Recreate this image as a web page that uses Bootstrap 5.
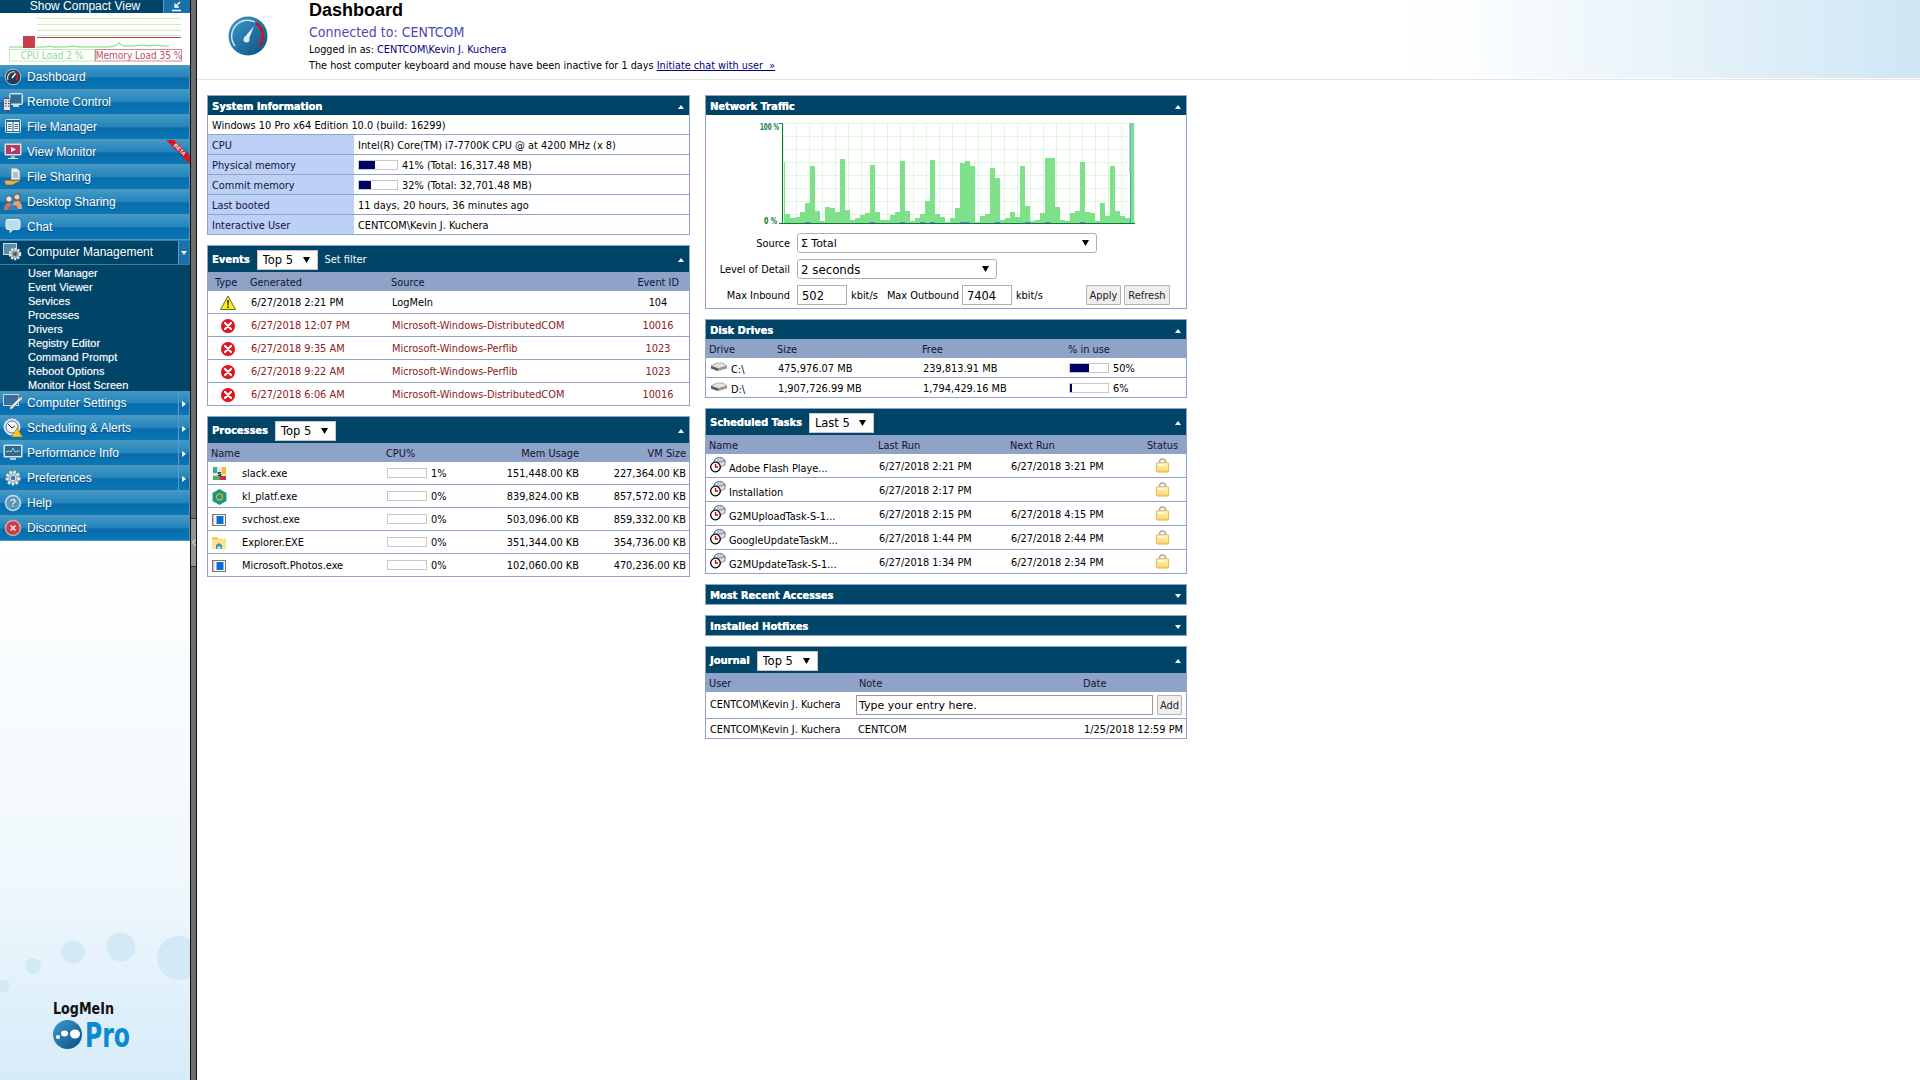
<!DOCTYPE html>
<html lang="en">
<head>
<meta charset="utf-8">
<title>Dashboard</title>
<link rel="stylesheet" href="https://cdn.jsdelivr.net/npm/bootstrap@5.3.0/dist/css/bootstrap.min.css">
<style>
html,body{height:100%;overflow:hidden;background:#fff}
body{font-family:"DejaVu Sans Condensed","DejaVu Sans",sans-serif;font-size:10.9px;line-height:1.2;color:#000}
.lm-defs{width:0;height:0;display:block}
.lm-shell{height:1080px;width:1920px}
.lm-side{width:190px;flex:none;height:1080px;background:linear-gradient(180deg,#fff 541px,#f0f8fd 880px,#d6ebf8 1080px);overflow:hidden}
.lm-split{width:7px;flex:none;background:#6e6e6e;border-left:1px solid #111;border-right:1px solid #111;height:1080px;padding-top:518px}
.lm-handle{height:49px;background:#959595;border-top:1px solid #333;border-bottom:1px solid #333;display:flex;align-items:center;justify-content:center}
.lm-compact{height:13px;background:#004468;color:#fff;font-family:"Liberation Sans",sans-serif;font-size:12px;line-height:13px;overflow:hidden}
.lm-compact span{width:163px;text-align:center;flex:none;padding-left:7px}
.lm-compact b{flex:1;background:#1871a8;border-left:1px solid #5c9cc4;display:flex;justify-content:center;align-items:center}
.lm-mini{height:52px;flex:none}
.lm-mini svg{display:block}
.lm-menu{background:#004468}
.lm-item{height:25px;display:flex;align-items:center;position:relative;color:#fff;font-family:"Liberation Sans",sans-serif;font-size:12px;text-decoration:none;background:linear-gradient(180deg,#3f98c5 0,#2484bb 46%,#0a6cab 52%,#0777b8 100%);border:1px solid #4f93b8;border-width:1px 1px 1px 0;text-shadow:0 1px 1px rgba(0,40,70,.55);padding:0 0 1px 27px}
.lm-item:hover{color:#fff}
.lm-item>svg.lm-ic{position:absolute;left:3px;top:1px;width:20px;height:20px}
.lm-item.lm-on{background:#004468;border-color:#3a7ea4}
.lm-arrow{position:absolute;right:0;top:0;bottom:0;width:11px;border-left:1px solid #5c9cc4;display:flex;align-items:center;justify-content:center}
.lm-on .lm-arrow{background:#1871a8}
.lm-sub{background:#004468;padding:1px 0 0 28px;height:126px}
.lm-sub a{display:block;height:14px;line-height:14px;color:#fff;font-family:"Liberation Sans",sans-serif;font-size:11px;text-decoration:none;text-shadow:0 0 1px rgba(255,255,255,.4)}
.lm-beta{position:absolute;right:-1px;top:-1px}
.lm-logo{margin-top:auto;display:block}
.lm-main{flex:1;min-width:0}
.lm-top{height:80px;padding-left:31px;background:linear-gradient(90deg,#fff 70%,#fbfdfe 74%,#cfe6f5 100%) no-repeat 0 0/100% 78px;border-bottom:1px solid #e4e4e4}
.lm-gauge{width:40px;height:40px;margin-top:16px;flex:none}
.lm-htext{margin-left:41px}
.lm-htext h1{font-family:"Liberation Sans",sans-serif;font-weight:700;font-size:18px;line-height:21px;margin:0;color:#000}
.lm-conn{font-size:14px;line-height:17px;color:#4a4ab4;margin:3px 0 1px}
.lm-line{height:16px;line-height:16px;font-size:10.8px}
.lm-line a,.lm-u{color:#000080}
.lm-u{text-decoration:none}
.lm-cols{padding:15px 0 0 10px;gap:15px}
.lm-c1{width:483px}
.lm-c2{width:482px}
.lm-panel{border:1px solid #8fa2c8;border-bottom:0;border-radius:0;margin-bottom:10px;background:#fff;--bs-card-bg:#fff}
.lm-head{background:#004468;color:#fff;height:19px;padding:2px 5px 0 4px;border:0;border-radius:0!important;font-weight:700;font-size:11px;gap:7px;text-shadow:.3px 0 0 #fff}
.lm-head.lm-tall{height:26px;padding-top:1px}
.lm-head a{color:#fff;text-decoration:none;font-weight:400;font-size:10.9px;text-shadow:none}
.lm-tri{margin-left:auto;flex:none}
.lm-closed{border-bottom:1px solid #8fa2c8}
.table.lm-tb{table-layout:fixed;margin:0;--bs-table-bg:transparent;width:100%;border-collapse:separate;border-spacing:0}
.table.lm-tb>:not(caption)>*>*{padding:3px 3px 0 4px;border-bottom:1px solid #8fa2c8;vertical-align:middle;height:20px;box-shadow:none;color:#000;background:transparent;white-space:nowrap;overflow:hidden}
.table.lm-tb>thead>tr>th{height:19px;background:#8fa2c8;font-weight:400;color:#141433;border:0;padding:2px 3px 0}
.table.lm-tb>tbody>tr>td.lm-lab{background:#bdd0f5;color:#14143a}
.table.lm-tb.lm-r23>tbody>tr>td{height:23px;padding-top:1px}
.table.lm-tb.lm-r24>tbody>tr>td{height:24px;padding-top:2px}
.table.lm-tb>tbody>tr.lm-err>td{color:#8c1a22}
.table.lm-tb>tbody>tr.lm-jrow>td{height:27px;padding-top:0}
.table.lm-tb>tbody>tr>td.lm-note-td{padding:0 4px 0 0}
.table.lm-tb>tbody>tr>td.lm-p2{padding-left:2px}
.table.lm-tb>thead>tr>th.lm-th-type{padding-left:7px}
.table.lm-tb>thead>tr>th.lm-th-id{padding-right:10px}
.table.lm-tb>tbody>tr>td.lm-td-id{padding-left:18px}
.lm-bar{display:inline-block;width:40px;height:10px;border:1px solid #c8c8c8;background:#fff;vertical-align:-1px;margin-right:4px;overflow:hidden}
.lm-bar i{display:block;height:100%;background:#000066}
.w-41{width:41%}.w-32{width:32%}.w-50p{width:50%}.w-6{width:6%}.w-0{width:0}
.c30{width:30px}.c39{width:39px}.c68{width:68px}.c99{width:99px}.c100{width:100px}.c132{width:132px}.c141{width:141px}.c145{width:145px}.c146{width:146px}.c150{width:150px}.c169{width:169px}.c224{width:224px}
.lm-netb{padding:5px 0 3px;border-bottom:1px solid #8fa2c8}
.lm-netb svg{display:block;margin-bottom:7px}
.lm-frow{height:20px;margin-bottom:6px}
.lm-frow.lm-last{margin-bottom:0}
.lm-frow>label,.lm-frow>span{padding-top:1px}
.lm-flab{width:84px;margin-right:7px;text-align:right;flex:none}
.form-select.lm-sel{font-family:"DejaVu Sans",sans-serif;font-size:11.5px;height:20px;line-height:16px;min-height:0;padding:1px 14px 0 3px;border:1px solid #b0b0b0;border-radius:3px;background-color:#fff;color:#000;background-position:right 7px center;background-size:7px 6px;background-image:url("data:image/svg+xml,%3Csvg xmlns='http://www.w3.org/2000/svg' viewBox='0 0 7 6'%3E%3Cpath d='M0 0h7L3.500 6z'/%3E%3C/svg%3E");box-shadow:none;width:auto;flex:none}
.form-select.lm-sel.lm-w300{width:300px;font-size:10.9px}
.form-select.lm-sel.lm-w200{width:200px;font-size:11.8px}
.form-select.lm-sel.lm-w61{width:61px;border-radius:0;border-color:#c8c8c8;padding-left:5px}
.form-select.lm-sel.lm-w64{width:65px;border-radius:0;border-color:#c8c8c8;padding-left:5px}
.form-control.lm-inp{font-family:"DejaVu Sans",sans-serif;font-size:11.5px;height:20px;min-height:0;padding:1px 4px 0;border:1px solid #b0b0b0;border-radius:0;width:50px;flex:none;color:#000;box-shadow:none}
.form-control.lm-inp.lm-note{width:297px;font-size:11px;padding:1px 2px 0;border-color:#999}
.btn.lm-btn{font-family:"DejaVu Sans Condensed",sans-serif;font-size:11px;line-height:16px;height:20px;padding:1px 0 0;border:1px solid #b4b4b4;border-radius:1px;background:#eee;color:#222;flex:none}
.lm-w35{width:35px}.lm-w46{width:46px}.lm-w25{width:25px}
.lm-gap4{margin-left:4px}.lm-gap12{margin-left:9px}.lm-gap3{margin-left:3px}.lm-gapa{margin-left:auto}.lm-end{margin-right:16px}
.lm-i{display:inline-block;vertical-align:middle}
.lm-tn{vertical-align:-1px;margin-right:3px}
.lm-dn{vertical-align:1px;margin-right:3px}
.lm-sts{margin:-3px 2px 0 0}
</style>
</head>
<body>
<svg class="lm-defs" aria-hidden="true">
<defs>
<linearGradient id="gBlue" x1="0" y1="0" x2="1" y2="1"><stop offset="0" stop-color="#3f9ad0"/><stop offset="1" stop-color="#0a4f80"/></linearGradient>
<linearGradient id="gYel" x1="0" y1="0" x2="0" y2="1"><stop offset="0" stop-color="#fff6c8"/><stop offset="1" stop-color="#f8d468"/></linearGradient>
<symbol id="s-warn" viewBox="0 0 16 16"><path d="M8 1L15.500 14.500H.5z" fill="#ffee10" stroke="#6a6a20" stroke-width="1"/><path d="M7.200 5h1.600l-.3 5.500h-1zM7.200 11.500h1.600V13H7.200z" fill="#111"/></symbol>
<symbol id="s-err" viewBox="0 0 16 16"><circle cx="8" cy="8.500" r="7" fill="#a8a8a8" opacity=".5"/><circle cx="8" cy="8" r="7" fill="#e8101c"/><path d="M5 5l6 6M11 5l-6 6" stroke="#fff" stroke-width="2.200" stroke-linecap="round"/></symbol>
<symbol id="s-clock" viewBox="0 0 16 16"><ellipse cx="9.500" cy="4.500" rx="5.500" ry="4" fill="#c8cfdc" stroke="#60687c"/><path d="M4 6l11-2v4l-9 4z" fill="#d8dee8" stroke="#60687c" stroke-width=".7"/><circle cx="5.500" cy="10" r="4.800" fill="#fff" stroke="#000" stroke-width="1.300"/><path d="M5.500 7v3h2.500" stroke="#c80000" stroke-width="1.300" fill="none"/></symbol>
<symbol id="s-lock" viewBox="0 0 16 16"><path d="M5 5.500V3.500a3 2.500 0 016 0v2" fill="none" stroke="#9c9cac" stroke-width="1.400"/><rect x="1.500" y="5" width="13" height="10" rx="1.500" fill="url(#gYel)" stroke="#e0b040"/><path d="M3.500 7.500h5" stroke="#fff" stroke-width="1.500"/></symbol>
<symbol id="s-disk" viewBox="0 0 18 10"><path d="M1 4L7 1h6l4 3v2.500L8 9 1 6.500z" fill="#9a9a9a"/><path d="M1 4l7 2.500L17 4 13 1H7z" fill="#e4e4e4" stroke="#777" stroke-width=".5"/><path d="M1 4v2.500L8 9V6.500z" fill="#5c5c5c"/></symbol>
<symbol id="s-win" viewBox="0 0 14 12"><rect x=".5" y=".5" width="13" height="11" fill="#fff" stroke="#777"/><rect x="1" y="1" width="1.500" height="10" fill="#ccc"/><rect x="4.500" y="2" width="7" height="8" fill="#0a6fd8"/></symbol>
<symbol id="s-up" viewBox="0 0 6 4"><path d="M3 0l3 4H0z" fill="#fff"/></symbol>
<symbol id="s-dn" viewBox="0 0 6 4"><path d="M0 0h6L3 4z" fill="#fff"/></symbol>
<symbol id="s-rt" viewBox="0 0 4 6"><path d="M0 0l4 3-4 3z" fill="#fff"/></symbol>
<symbol id="m-dash" viewBox="0 0 20 20"><circle cx="10" cy="10" r="7.800" fill="#223b52" stroke="#a8c4d8"/><path d="M5 13a6 6 0 0 1 7-8" fill="none" stroke="#d8e4ec" stroke-width="1.100"/><path d="M12.500 5.500a6 6 0 0 1 1 7.500" fill="none" stroke="#e02020" stroke-width="1.500"/><path d="M9 11l3.500-4.500" stroke="#fff" stroke-width="1.500"/></symbol>
<symbol id="m-remote" viewBox="0 0 20 20"><rect x="6.500" y="1.500" width="13" height="11" rx="1" fill="#7fa8c0" stroke="#dbe7ee"/><rect x="8" y="3" width="10" height="8" fill="#2d6e96"/><rect x="10" y="13" width="6" height="2" fill="#c8d8e2"/><rect x=".5" y="6.500" width="7" height="12" rx="1" fill="#dfe8ee" stroke="#547"/><path d="M2 9h1.500M5 9h1.500M2 11.500h1.500M5 11.500h1.500M2 14h1.500M5 14h1.500" stroke="#334"/></symbol>
<symbol id="m-file" viewBox="0 0 20 20"><rect x="2.500" y="2.500" width="15" height="13" rx="1" fill="#1e6c9c" stroke="#d8e6ee"/><rect x="4" y="5" width="5.500" height="9" fill="#eef4f8"/><rect x="10.500" y="5" width="5.500" height="9" fill="#eef4f8"/><path d="M5 7.500h3.500M5 9.500h3.500M5 11.500h3.500M11.500 7.500h3.500M11.500 9.500h3.500M11.500 11.500h3.500" stroke="#345" stroke-width=".8"/></symbol>
<symbol id="m-view" viewBox="0 0 20 20"><rect x="1.500" y="1.500" width="17" height="12" rx="1" fill="#d8e0e8"/><rect x="3" y="3" width="14" height="9" fill="#b43a60"/><path d="M8 5l5 2.500L8 10z" fill="#fff"/><rect x="8" y="14" width="4" height="2" fill="#a8b8c4"/><rect x="5" y="16" width="10" height="1" fill="#d8e0e8"/></symbol>
<symbol id="m-share" viewBox="0 0 20 20"><path d="M8 1h6l3 3v9H8z" fill="#e8f0f6" stroke="#6f8ea4"/><path d="M10 6h5M10 8h5M10 10h5" stroke="#6f8ea4"/><path d="M1 14c4-1 6-1 9 0l6-1c1 1 0 2-1 2l-6 3H3z" fill="#e8b050" stroke="#8a5a10" stroke-width=".6"/></symbol>
<symbol id="m-people" viewBox="0 0 20 20"><circle cx="6" cy="7" r="3.200" fill="#e8e8e8" stroke="#556"/><path d="M1 18c0-5 2-7 5-7s5 2 5 7z" fill="#d87050"/><circle cx="14" cy="5" r="3.200" fill="#f0d0b0" stroke="#644"/><path d="M9 17c0-6 2-8 5-8s5 2 5 8z" fill="#e8a070"/><path d="M5 18c0-4 2-5 5-5s5 1 5 5z" fill="#3c7fb0"/></symbol>
<symbol id="m-chat" viewBox="0 0 20 20"><path d="M5 2.500h10a2 2 0 012 2v6a2 2 0 01-2 2H10l-3 3v-3H5a2 2 0 01-2-2v-6a2 2 0 012-2z" fill="#bcdcf0" stroke="#eaf4fa"/></symbol>
<symbol id="m-cm" viewBox="0 0 20 20"><rect x=".5" y="1.500" width="13" height="11" fill="#5c8cab" stroke="#c8d8e2"/><circle cx="12" cy="12" r="5" fill="#9aa" stroke="#e4e8ec" stroke-width="2.500" stroke-dasharray="2 1.200"/><circle cx="12" cy="12" r="2" fill="#556"/></symbol>
<symbol id="m-cs" viewBox="0 0 20 20"><rect x=".5" y="1.500" width="15" height="11" fill="#3a6e94" stroke="#c8d8e2"/><path d="M18 2c-2 0-4 2-3 4l-8 8c-1 2 1 3 2 2l8-8c2 0 3-3 2-5l-2 2-2-1z" fill="#dfe6ec" stroke="#556" stroke-width=".5"/></symbol>
<symbol id="m-sch" viewBox="0 0 20 20"><circle cx="9" cy="9" r="8" fill="#d0dee8" stroke="#eef"/><circle cx="9" cy="9" r="6" fill="#f4f8fa" stroke="#5c7c90"/><path d="M5 6l4 4 3-2" stroke="#333" fill="none"/><path d="M14 10l5.500 9h-11z" fill="#f8c820" stroke="#8a6a10" stroke-width=".6"/></symbol>
<symbol id="m-perf" viewBox="0 0 20 20"><rect x=".5" y="1.500" width="19" height="13" rx="1" fill="#d8e4ec"/><rect x="2" y="3" width="16" height="10" fill="#2e6a90"/><path d="M3 9l3-1 2 1 2-4 2 4 3-1h2" stroke="#9ccbe6" fill="none"/><rect x="7" y="15" width="6" height="2" fill="#b8c8d4"/></symbol>
<symbol id="m-pref" viewBox="0 0 20 20"><circle cx="10" cy="10" r="6" fill="#a8b0b8" stroke="#e8ecef" stroke-width="3" stroke-dasharray="2.400 1.600"/><circle cx="10" cy="10" r="2.800" fill="#2f7fae" stroke="#e8ecef"/></symbol>
<symbol id="m-help" viewBox="0 0 20 20"><circle cx="10" cy="10" r="7.500" fill="#5c98bc" stroke="#c8dce8" stroke-width="1.500"/><text x="10" y="14" font-size="10.500" font-family="Liberation Sans" font-weight="700" fill="#e8f0f6" text-anchor="middle">?</text></symbol>
<symbol id="m-disc" viewBox="0 0 20 20"><circle cx="10" cy="10" r="7.500" fill="#c83c48" stroke="#d8a8ac" stroke-width="1.500"/><path d="M7.500 7.500l5 5M12.500 7.500l-5 5" stroke="#f4e8e8" stroke-width="1.700"/></symbol>
</defs>
</svg>
<div class="d-flex lm-shell">
  <aside class="lm-side d-flex flex-column">
    <div class="lm-compact d-flex"><span>Show Compact View</span><b><svg width="12" height="11" viewBox="0 0 12 11"><path d="M9 1L4 6M4 2.500V6h4M1 9.500h9" stroke="#fff" stroke-width="1.400" fill="none"/></svg></b></div>
    <div class="lm-mini bg-white">
      <svg width="190" height="52" viewBox="0 13 190 52">
        <path d="M37 18.500h144M37 24.500h144M37 30.500h144M37 35.500h144" stroke="#c4f4bc"/>
        <path d="M37 37.500h144" stroke="#c4404a"/>
        <rect x="23" y="36" width="12" height="12" fill="#c4404a"/>
        <path d="M9 47h14M36 47l10 0 3-1 4 1 12 0 8-1 6 1 12 0 18 0 6-1 4-3 4 3 10 0 8-1 8 1 8-1 6 1 6 0" stroke="#78d878" fill="none"/>
        <rect x="9.500" y="49.500" width="85" height="11.500" fill="#fff" stroke="#b8eeb0"/>
        <rect x="95.500" y="49.500" width="86" height="11.500" fill="#fff" stroke="#d08c98"/>
        <text x="52" y="59" text-anchor="middle" font-size="10" fill="#90d890" font-family="DejaVu Sans Condensed">CPU Load 2 %</text>
        <text x="139" y="59" text-anchor="middle" font-size="10" fill="#c05060" font-family="DejaVu Sans Condensed">Memory Load 35 %</text>
      </svg>
    </div>
    <nav class="lm-menu">
      <a class="lm-item" href="#"><svg class="lm-ic"><use href="#m-dash"/></svg>Dashboard</a>
      <a class="lm-item" href="#"><svg class="lm-ic"><use href="#m-remote"/></svg>Remote Control</a>
      <a class="lm-item" href="#"><svg class="lm-ic"><use href="#m-file"/></svg>File Manager</a>
      <a class="lm-item" href="#"><svg class="lm-ic"><use href="#m-view"/></svg>View Monitor
        <svg class="lm-beta" width="24" height="24" viewBox="0 0 24 24"><path d="M0 0h8l16 16v8z" fill="#d8141c"/><text x="12.500" y="11" font-size="5.500" font-weight="700" fill="#fff" text-anchor="middle" transform="rotate(45 12.500 11)" font-family="Liberation Sans">BETA</text></svg></a>
      <a class="lm-item" href="#"><svg class="lm-ic"><use href="#m-share"/></svg>File Sharing</a>
      <a class="lm-item" href="#"><svg class="lm-ic"><use href="#m-people"/></svg>Desktop Sharing</a>
      <a class="lm-item" href="#"><svg class="lm-ic"><use href="#m-chat"/></svg>Chat</a>
      <a class="lm-item lm-on" href="#"><svg class="lm-ic"><use href="#m-cm"/></svg>Computer Management<span class="lm-arrow"><svg width="6" height="4"><use href="#s-dn"/></svg></span></a>
      <div class="lm-sub">
        <a href="#">User Manager</a><a href="#">Event Viewer</a><a href="#">Services</a><a href="#">Processes</a><a href="#">Drivers</a><a href="#">Registry Editor</a><a href="#">Command Prompt</a><a href="#">Reboot Options</a><a href="#">Monitor Host Screen</a>
      </div>
      <a class="lm-item" href="#"><svg class="lm-ic"><use href="#m-cs"/></svg>Computer Settings<span class="lm-arrow"><svg width="4" height="6"><use href="#s-rt"/></svg></span></a>
      <a class="lm-item" href="#"><svg class="lm-ic"><use href="#m-sch"/></svg>Scheduling &amp; Alerts<span class="lm-arrow"><svg width="4" height="6"><use href="#s-rt"/></svg></span></a>
      <a class="lm-item" href="#"><svg class="lm-ic"><use href="#m-perf"/></svg>Performance Info<span class="lm-arrow"><svg width="4" height="6"><use href="#s-rt"/></svg></span></a>
      <a class="lm-item" href="#"><svg class="lm-ic"><use href="#m-pref"/></svg>Preferences<span class="lm-arrow"><svg width="4" height="6"><use href="#s-rt"/></svg></span></a>
      <a class="lm-item" href="#"><svg class="lm-ic"><use href="#m-help"/></svg>Help</a>
      <a class="lm-item" href="#"><svg class="lm-ic"><use href="#m-disc"/></svg>Disconnect</a>
    </nav>
    <svg class="lm-logo" width="190" height="160" viewBox="0 920 190 160">
      <circle cx="4" cy="986" r="6" fill="#d3e9f6"/><circle cx="33" cy="966" r="8" fill="#d3e9f6"/><circle cx="73" cy="952" r="11.500" fill="#d3e9f6"/><circle cx="121" cy="947" r="14.500" fill="#d3e9f6"/><circle cx="179" cy="958" r="22" fill="#d3e9f6"/>
      <text x="53" y="1014" font-size="16.500" font-weight="700" fill="#111" font-family="DejaVu Sans Condensed" textLength="61" lengthAdjust="spacingAndGlyphs">LogMeIn</text>
      <circle cx="67.500" cy="1034.500" r="14.500" fill="url(#gBlue)"/><circle cx="58" cy="1037" r="2" fill="#fff"/><ellipse cx="64.500" cy="1033.500" rx="3.500" ry="3" fill="#fff"/><ellipse cx="75" cy="1034" rx="5" ry="4.500" fill="#fff"/>
      <text x="85" y="1047" font-size="33" font-weight="700" fill="#0a8ad0" font-family="DejaVu Sans Condensed" textLength="45" lengthAdjust="spacingAndGlyphs">Pro</text>
    </svg>
  </aside>
  <div class="lm-split"><div class="lm-handle"><svg width="4" height="7" viewBox="0 0 4 7"><path d="M3.500 .5L.5 3.500l3 3" stroke="#eee" fill="none"/></svg></div></div>
  <main class="lm-main">
    <header class="lm-top d-flex">
      <svg class="lm-gauge" viewBox="0 0 40 40"><circle cx="20" cy="20" r="19.500" fill="url(#gBlue)"/><path d="M7 30A16 16 0 0 1 27 6" fill="none" stroke="#d8e8f0" stroke-width="1.400"/><path d="M28 7a16 16 0 0 1 3 23" fill="none" stroke="#d81010" stroke-width="2.500"/><path d="M16 22l10-12-6 15z" fill="#e8f0f6"/><circle cx="18.500" cy="23.500" r="3" fill="#dfe9ef"/></svg>
      <div class="lm-htext">
        <h1>Dashboard</h1>
        <div class="lm-conn">Connected to: CENTCOM</div>
        <div class="lm-line">Logged in as: <span class="lm-u">CENTCOM\Kevin J. Kuchera</span></div>
        <div class="lm-line">The host computer keyboard and mouse have been inactive for 1 days <a href="#">Initiate chat with user &nbsp;»</a></div>
      </div>
    </header>
    <div class="d-flex lm-cols">
      <div class="lm-c1">
        <section class="card lm-panel">
          <div class="card-header lm-head d-flex align-items-center">System Information<svg class="lm-tri" width="6" height="4"><use href="#s-up"/></svg></div>
          <table class="table lm-tb">
            <colgroup><col class="c146"><col></colgroup>
            <tbody>
              <tr><td colspan="2">Windows 10 Pro x64 Edition 10.0 (build: 16299)</td></tr>
              <tr><td class="lm-lab">CPU</td><td>Intel(R) Core(TM) i7-7700K CPU @ at 4200 MHz (x 8)</td></tr>
              <tr><td class="lm-lab">Physical memory</td><td><span class="lm-bar"><i class="w-41"></i></span>41% (Total: 16,317.48 MB)</td></tr>
              <tr><td class="lm-lab">Commit memory</td><td><span class="lm-bar"><i class="w-32"></i></span>32% (Total: 32,701.48 MB)</td></tr>
              <tr><td class="lm-lab">Last booted</td><td>11 days, 20 hours, 36 minutes ago</td></tr>
              <tr><td class="lm-lab">Interactive User</td><td>CENTCOM\Kevin J. Kuchera</td></tr>
            </tbody>
          </table>
        </section>
        <section class="card lm-panel">
          <div class="card-header lm-head lm-tall d-flex align-items-center">Events<select class="form-select lm-sel lm-w61" aria-label="Events"><option>Top 5</option></select><a href="#">Set filter</a><svg class="lm-tri" width="6" height="4"><use href="#s-up"/></svg></div>
          <table class="table lm-tb lm-r23">
            <colgroup><col class="c39"><col class="c141"><col class="c224"><col></colgroup>
            <thead><tr><th class="lm-th-type">Type</th><th>Generated</th><th>Source</th><th class="text-end lm-th-id">Event ID</th></tr></thead>
            <tbody>
              <tr><td class="text-center"><svg class="lm-i" width="16" height="16"><use href="#s-warn"/></svg></td><td>6/27/2018 2:21 PM</td><td>LogMeIn</td><td class="text-center lm-td-id">104</td></tr>
              <tr class="lm-err"><td class="text-center"><svg class="lm-i" width="16" height="16"><use href="#s-err"/></svg></td><td>6/27/2018 12:07 PM</td><td>Microsoft-Windows-DistributedCOM</td><td class="text-center lm-td-id">10016</td></tr>
              <tr class="lm-err"><td class="text-center"><svg class="lm-i" width="16" height="16"><use href="#s-err"/></svg></td><td>6/27/2018 9:35 AM</td><td>Microsoft-Windows-Perflib</td><td class="text-center lm-td-id">1023</td></tr>
              <tr class="lm-err"><td class="text-center"><svg class="lm-i" width="16" height="16"><use href="#s-err"/></svg></td><td>6/27/2018 9:22 AM</td><td>Microsoft-Windows-Perflib</td><td class="text-center lm-td-id">1023</td></tr>
              <tr class="lm-err"><td class="text-center"><svg class="lm-i" width="16" height="16"><use href="#s-err"/></svg></td><td>6/27/2018 6:06 AM</td><td>Microsoft-Windows-DistributedCOM</td><td class="text-center lm-td-id">10016</td></tr>
            </tbody>
          </table>
        </section>
        <section class="card lm-panel">
          <div class="card-header lm-head lm-tall d-flex align-items-center">Processes<select class="form-select lm-sel lm-w61" aria-label="Processes"><option>Top 5</option></select><svg class="lm-tri" width="6" height="4"><use href="#s-up"/></svg></div>
          <table class="table lm-tb lm-r23">
            <colgroup><col class="c30"><col class="c145"><col class="c100"><col class="c99"><col></colgroup>
            <thead><tr><th colspan="2">Name</th><th>CPU%</th><th class="text-end">Mem Usage</th><th class="text-end">VM Size</th></tr></thead>
            <tbody>
              <tr><td><svg class="lm-i" width="15" height="15" viewBox="0 0 15 15"><rect x="1" y="1" width="13" height="13" fill="#dfe8e0"/><path d="M1 1h4v6H1z" fill="#38a8a0"/><path d="M10 1h4v7h-4z" fill="#f0c030"/><path d="M1 10h7v4H1z" fill="#5aa868"/><path d="M8 10h6v4H8z" fill="#d82848"/><text x="7.500" y="9.500" font-size="8" font-weight="700" text-anchor="middle" font-family="Liberation Sans">s</text></svg></td><td>slack.exe</td><td><span class="lm-bar"><i class="w-0"></i></span>1%</td><td class="text-end">151,448.00 KB</td><td class="text-end">227,364.00 KB</td></tr>
              <tr><td><svg class="lm-i" width="15" height="16" viewBox="0 0 15 16"><path d="M7.500 0l7 4v8l-7 4-7-4V4z" fill="#0e9c82"/><circle cx="7.500" cy="8" r="3" fill="none" stroke="#e8a030" stroke-width="1.300"/></svg></td><td>kl_platf.exe</td><td><span class="lm-bar"><i class="w-0"></i></span>0%</td><td class="text-end">839,824.00 KB</td><td class="text-end">857,572.00 KB</td></tr>
              <tr><td><svg class="lm-i" width="14" height="12"><use href="#s-win"/></svg></td><td>svchost.exe</td><td><span class="lm-bar"><i class="w-0"></i></span>0%</td><td class="text-end">503,096.00 KB</td><td class="text-end">859,332.00 KB</td></tr>
              <tr><td><svg class="lm-i" width="14" height="12" viewBox="0 0 14 12"><path d="M0 0h5l1 1.500h8V12H0z" fill="#ffe48c"/><path d="M0 1.500h6" stroke="#e8b830"/><path d="M4 12V8l3-2 3 2v4H8.500V9.500h-3V12z" fill="#2c94d8"/></svg></td><td>Explorer.EXE</td><td><span class="lm-bar"><i class="w-0"></i></span>0%</td><td class="text-end">351,344.00 KB</td><td class="text-end">354,736.00 KB</td></tr>
              <tr><td><svg class="lm-i" width="14" height="12"><use href="#s-win"/></svg></td><td>Microsoft.Photos.exe</td><td><span class="lm-bar"><i class="w-0"></i></span>0%</td><td class="text-end">102,060.00 KB</td><td class="text-end">470,236.00 KB</td></tr>
            </tbody>
          </table>
        </section>
      </div>
      <div class="lm-c2">
        <section class="card lm-panel">
          <div class="card-header lm-head d-flex align-items-center">Network Traffic<svg class="lm-tri" width="6" height="4"><use href="#s-up"/></svg></div>
          <div class="lm-netb">
            <svg width="480" height="106" viewBox="706 120 480 106">
              <defs><pattern id="pGrid" x="783" y="123" width="13" height="13" patternUnits="userSpaceOnUse"><path d="M13 0H0V13" fill="none" stroke="#c0f2c0" stroke-width="1"/></pattern></defs>
              <rect x="783" y="123" width="352" height="100" fill="url(#pGrid)"/>
              <path d="M784 223V162h1V214h5V218h5V217h5V212h5V203h5V166h5V211h5V221h5V207h5V208h5V212h5V159h5V210h5V220h5V218h5V215h5V213h5V165h5V212h5V220h5V220h5V215h5V212h5V161h5V211h5V221h5V218h5V214h5V201h5V160h5V214h5V217h5V222h5V218h5V208h5V163h5V161h5V166h5V222h5V216h5V214h5V168h5V178h5V220h5V218h5V212h5V217h5V166h5V206h5V221h5V220h5V213h5V158h10V207h5V220h5V221h5V213h5V211h5V162h5V212h5V213h5V221h5V203h5V216h5V166h5V211h5V216h5V218h5V123h4V223z" fill="#7fe08a"/>
              <path d="M1130 173V123" stroke="#8080f0" fill="none"/>
              <path d="M1130.500 173V223" stroke="#5aa0c0" fill="none"/>
              <path d="M805 222.500h5M870 222.500h5M900 222.500h5M920 222.500h5M930 222.500h5M960 222.500h10M995 222.500h5M1025 222.500h5M1045 222.500h5M1080 222.500h5" stroke="#6a70e8"/>
              <path d="M779 123.500h3.500V223.500H1135M779 223.500h4" stroke="#0a7a3a" fill="none"/>
              <text x="760" y="130" font-size="8" font-weight="700" fill="#0a7a3a" font-family="DejaVu Sans Condensed" textLength="19" lengthAdjust="spacingAndGlyphs">100 %</text>
              <text x="764" y="224" font-size="8" font-weight="700" fill="#0a7a3a" font-family="DejaVu Sans Condensed" textLength="13" lengthAdjust="spacingAndGlyphs">0 %</text>
            </svg>
            <div class="d-flex align-items-center lm-frow"><label class="lm-flab">Source</label><select class="form-select lm-sel lm-w300" aria-label="Source"><option>Σ Total</option></select></div>
            <div class="d-flex align-items-center lm-frow"><label class="lm-flab">Level of Detail</label><select class="form-select lm-sel lm-w200" aria-label="Level of Detail"><option>2 seconds</option></select></div>
            <div class="d-flex align-items-center lm-frow lm-last"><label class="lm-flab">Max Inbound</label><input class="form-control lm-inp" value="502" aria-label="Max Inbound"><span class="lm-gap4">kbit/s</span><span class="lm-gap12">Max Outbound</span><input class="form-control lm-inp lm-gap3" value="7404" aria-label="Max Outbound"><span class="lm-gap4">kbit/s</span><button class="btn lm-btn lm-w35 lm-gapa">Apply</button><button class="btn lm-btn lm-w46 lm-gap3 lm-end">Refresh</button></div>
          </div>
        </section>
        <section class="card lm-panel">
          <div class="card-header lm-head d-flex align-items-center">Disk Drives<svg class="lm-tri" width="6" height="4"><use href="#s-up"/></svg></div>
          <table class="table lm-tb">
            <colgroup><col class="c68"><col class="c145"><col class="c146"><col></colgroup>
            <thead><tr><th>Drive</th><th>Size</th><th>Free</th><th>% in use</th></tr></thead>
            <tbody>
              <tr><td><svg class="lm-dn" width="18" height="10"><use href="#s-disk"/></svg>C:\</td><td>475,976.07 MB</td><td>239,813.91 MB</td><td><span class="lm-bar"><i class="w-50p"></i></span>50%</td></tr>
              <tr><td><svg class="lm-dn" width="18" height="10"><use href="#s-disk"/></svg>D:\</td><td>1,907,726.99 MB</td><td>1,794,429.16 MB</td><td><span class="lm-bar"><i class="w-6"></i></span>6%</td></tr>
            </tbody>
          </table>
        </section>
        <section class="card lm-panel">
          <div class="card-header lm-head lm-tall d-flex align-items-center">Scheduled Tasks<select class="form-select lm-sel lm-w64" aria-label="Scheduled Tasks"><option>Last 5</option></select><svg class="lm-tri" width="6" height="4"><use href="#s-up"/></svg></div>
          <table class="table lm-tb lm-r24">
            <colgroup><col class="c169"><col class="c132"><col class="c132"><col></colgroup>
            <thead><tr><th>Name</th><th>Last Run</th><th>Next Run</th><th class="text-center">Status</th></tr></thead>
            <tbody>
              <tr><td><svg class="lm-tn" width="16" height="16"><use href="#s-clock"/></svg>Adobe Flash Playe...</td><td>6/27/2018 2:21 PM</td><td>6/27/2018 3:21 PM</td><td class="text-center"><svg class="lm-i lm-sts" width="15" height="15"><use href="#s-lock"/></svg></td></tr>
              <tr><td><svg class="lm-tn" width="16" height="16"><use href="#s-clock"/></svg>Installation</td><td>6/27/2018 2:17 PM</td><td></td><td class="text-center"><svg class="lm-i lm-sts" width="15" height="15"><use href="#s-lock"/></svg></td></tr>
              <tr><td><svg class="lm-tn" width="16" height="16"><use href="#s-clock"/></svg>G2MUploadTask-S-1...</td><td>6/27/2018 2:15 PM</td><td>6/27/2018 4:15 PM</td><td class="text-center"><svg class="lm-i lm-sts" width="15" height="15"><use href="#s-lock"/></svg></td></tr>
              <tr><td><svg class="lm-tn" width="16" height="16"><use href="#s-clock"/></svg>GoogleUpdateTaskM...</td><td>6/27/2018 1:44 PM</td><td>6/27/2018 2:44 PM</td><td class="text-center"><svg class="lm-i lm-sts" width="15" height="15"><use href="#s-lock"/></svg></td></tr>
              <tr><td><svg class="lm-tn" width="16" height="16"><use href="#s-clock"/></svg>G2MUpdateTask-S-1...</td><td>6/27/2018 1:34 PM</td><td>6/27/2018 2:34 PM</td><td class="text-center"><svg class="lm-i lm-sts" width="15" height="15"><use href="#s-lock"/></svg></td></tr>
            </tbody>
          </table>
        </section>
        <section class="card lm-panel lm-closed"><div class="card-header lm-head d-flex align-items-center">Most Recent Accesses<svg class="lm-tri" width="6" height="4"><use href="#s-dn"/></svg></div></section>
        <section class="card lm-panel lm-closed"><div class="card-header lm-head d-flex align-items-center">Installed Hotfixes<svg class="lm-tri" width="6" height="4"><use href="#s-dn"/></svg></div></section>
        <section class="card lm-panel">
          <div class="card-header lm-head lm-tall d-flex align-items-center">Journal<select class="form-select lm-sel lm-w61" aria-label="Journal"><option>Top 5</option></select><svg class="lm-tri" width="6" height="4"><use href="#s-up"/></svg></div>
          <table class="table lm-tb">
            <colgroup><col class="c150"><col class="c224"><col></colgroup>
            <thead><tr><th>User</th><th>Note</th><th>Date</th></tr></thead>
            <tbody>
              <tr class="lm-jrow"><td>CENTCOM\Kevin J. Kuchera</td><td colspan="2" class="lm-note-td"><div class="d-flex justify-content-between"><input class="form-control lm-inp lm-note" value="Type your entry here." aria-label="Note"><button class="btn lm-btn lm-w25">Add</button></div></td></tr>
              <tr><td>CENTCOM\Kevin J. Kuchera</td><td class="lm-p2">CENTCOM</td><td class="text-end">1/25/2018 12:59 PM</td></tr>
            </tbody>
          </table>
        </section>
      </div>
    </div>
  </main>
</div>
<script src="https://cdn.jsdelivr.net/npm/bootstrap@5.3.0/dist/js/bootstrap.bundle.min.js"></script>
</body>
</html>
